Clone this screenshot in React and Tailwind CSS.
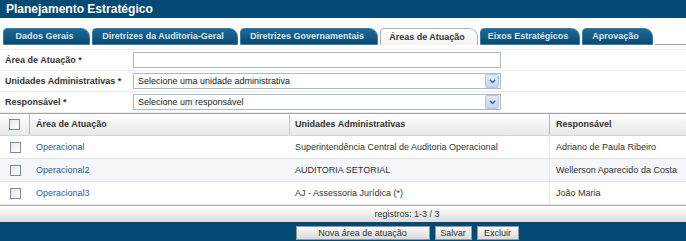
import React from "react";

const tabs = [
  { label: "Dados Gerais", w: "w-[87px]" },
  { label: "Diretrizes da Auditoria-Geral", w: "w-[146px]" },
  { label: "Diretrizes Governamentais", w: "w-[138px]" },
  { label: "Áreas de Atuação", w: "w-[98px]", active: true },
  { label: "Eixos Estratégicos", w: "w-[100px]" },
  { label: "Aprovação", w: "w-[71px]" },
];

const rows = [
  {
    area: "Operacional",
    unidade: "Superintendência Central de Auditoria Operacional",
    resp: "Adriano de Paula Ribeiro",
  },
  {
    area: "Operacional2",
    unidade: "AUDITORIA SETORIAL",
    resp: "Wellerson Aparecido da Costa",
  },
  {
    area: "Operacional3",
    unidade: "AJ - Assessoria Jurídica (*)",
    resp: "João Maria",
  },
];

const Checkbox = () => (
  <span className="block w-[11px] h-[11px] border border-[#7f8c99] bg-gradient-to-br from-[#e4e7ea] to-white" />
);

const Chevron = () => (
  <span className="flex items-center justify-center w-[14px] h-[14px] mr-[1px] border border-[#b6c6e6] rounded-[2px] bg-gradient-to-b from-[#e3ebfb] to-[#c3d3f1]">
    <svg width="7" height="5" viewBox="0 0 7 5">
      <path d="M0.8 0.8 L3.5 3.6 L6.2 0.8" fill="none" stroke="#4d6185" strokeWidth="1.4" />
    </svg>
  </span>
);

const FormRow = ({ label, children }) => (
  <div className="flex items-center h-[21px] border-b border-[#ececec]">
    <div className="w-[133px] pl-[5px] font-bold text-[#333]">{label}</div>
    {children}
  </div>
);

const App = () => {
  return (
    <div
      className="w-[686px] h-[241px] overflow-hidden bg-white text-[9px] leading-none"
      style={{ fontFamily: '"Liberation Sans", Arial, sans-serif' }}
    >
      <div className="w-[814px]">
        <div className="h-[18px] bg-[#034a74] pl-[6px] flex items-center">
          <h1 className="text-[12px] font-bold text-white">Planejamento Estratégico</h1>
        </div>

        <div className="flex items-end h-[27px] pl-[3px]">
          {tabs.map((t, i) => (
            <div
              key={i}
              className={`${t.w} h-[17px] mr-[2px] flex items-center justify-center pr-[4px] font-bold rounded-tl-[4px] rounded-tr-[9px] border ${
                t.active
                  ? "bg-gradient-to-b from-white to-[#f3f3f3] border-[#aab3bb] border-b-0 text-[#333]"
                  : "bg-gradient-to-b from-[#1f6a96] to-[#074a73] border-[#3a7aa3] text-[#dce7ef]"
              }`}
            >
              {t.label}
            </div>
          ))}
          <div className="flex-1 h-[1px] bg-[#9aa3aa]" />
        </div>

        <div className="pt-[4px]">
          <div className="border-t border-[#ececec]">
            <FormRow label="Área de Atuação *">
              <div className="w-[368px] h-[16px] border border-[#a8bacb] bg-white" />
            </FormRow>
            <FormRow label="Unidades Administrativas *">
              <div className="w-[368px] h-[16px] border border-[#a8bacb] bg-white flex items-center justify-between pl-[4px]">
                <span className="text-[#222]">Selecione uma unidade administrativa</span>
                <Chevron />
              </div>
            </FormRow>
            <FormRow label="Responsável *">
              <div className="w-[368px] h-[16px] border border-[#a8bacb] bg-white flex items-center justify-between pl-[4px]">
                <span className="text-[#222]">Selecione um responsável</span>
                <Chevron />
              </div>
            </FormRow>
          </div>
        </div>

        <div className="border-t border-[#a3a3a3]">
          <div className="flex h-[22px] bg-gradient-to-b from-white to-[#e8e8e8] border-b border-[#d6d6d6] font-bold text-[#333]">
            <div className="w-[30px] flex items-center justify-center border-r border-[#b9b9b9]">
              <Checkbox />
            </div>
            <div className="w-[260px] flex items-center pl-[6px] border-r border-[#c9c9c9]">Área de Atuação</div>
            <div className="w-[260px] flex items-center pl-[5px] border-r border-[#b9b9b9]">Unidades Administrativas</div>
            <div className="flex-1 flex items-center pl-[6px]">Responsável</div>
          </div>
          {rows.map((r, i) => (
            <div
              key={i}
              className={`flex h-[23px] border-b border-[#e4e4e4] text-[#333] ${
                i === 1 ? "bg-[#f4f6f9]" : "bg-white"
              }`}
            >
              <div className="w-[30px] flex items-center justify-center">
                <Checkbox />
              </div>
              <div className="w-[260px] flex items-center pl-[6px] text-[#2d5d97]">{r.area}</div>
              <div className="w-[260px] flex items-center pl-[5px] border-r border-[#ececec]">{r.unidade}</div>
              <div className="flex-1 flex items-center pl-[6px]">{r.resp}</div>
            </div>
          ))}
          <div className="h-[17px] flex items-center justify-center bg-gradient-to-b from-white to-[#dcdcdc] border-t border-[#b0b0b0] text-[#333]">
            registros: 1-3 / 3
          </div>
        </div>

        <div className="h-[24px] bg-[#034a74] flex justify-center gap-[5px] pt-[4px]">
          {[
            ["Nova área de atuação", "w-[134px]"],
            ["Salvar", "w-[37px]"],
            ["Excluir", "w-[42px]"],
          ].map(([label, w]) => (
            <button
              key={label}
              className={`${w} h-[14px] flex items-center justify-center border border-[#8e9aa4] bg-gradient-to-b from-[#fafafa] to-[#dadada] text-[#333]`}
            >
              {label}
            </button>
          ))}
        </div>
      </div>
    </div>
  );
};

export default App;
